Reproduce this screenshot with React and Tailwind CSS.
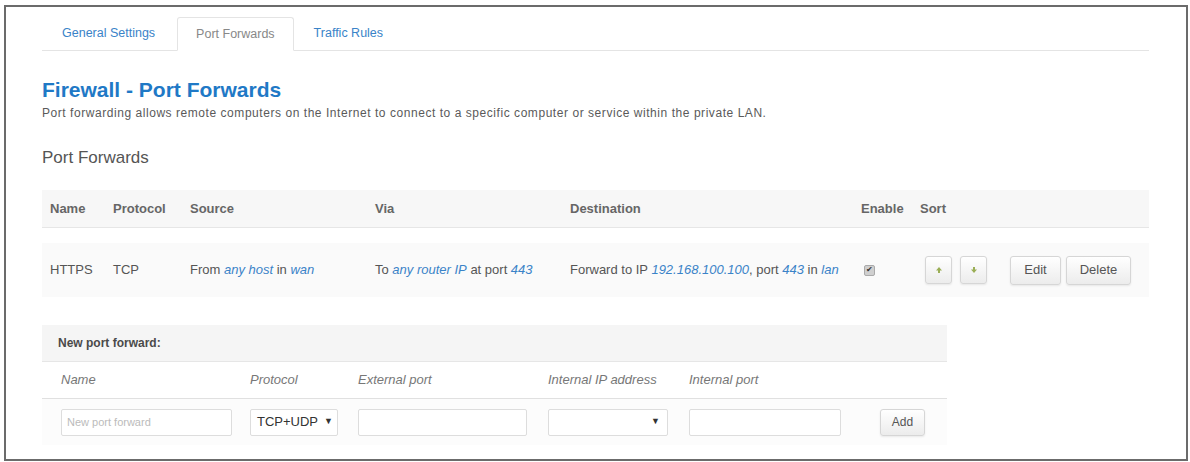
function Arrow({ up }) {
  return (
    <svg width="8" height="8" viewBox="0 0 8 8">
      {up ? (
        <path d="M4 1 L7 4.5 H5 V7 H3 V4.5 H1 Z" fill="#9aae55" />
      ) : (
        <path d="M4 7 L7 3.5 H5 V1 H3 V3.5 H1 Z" fill="#9aae55" />
      )}
    </svg>
  );
}

function Btn({ children, className = "" }) {
  return (
    <button
      className={`rounded-[3px] border border-[#d6d6d6] bg-gradient-to-b from-white to-[#ececec] text-[#555] shadow-[0_1px_2px_rgba(0,0,0,0.08)] ${className}`}
    >
      {children}
    </button>
  );
}

function A({ children }) {
  return <span className="italic text-[#3a83c8]">{children}</span>;
}

export default function App() {
  const font = { fontFamily: '"Liberation Sans", Arial, sans-serif' };
  return (
    <div className="w-[1190px] h-[462px] bg-white pt-[5px] pl-[4px]" style={font}>
      <div className="w-[1184px] h-[456px] border-2 border-[#6b6b6b] pl-[36px] pr-[37px]">
        {/* tabs */}
        <div className="flex items-end gap-[2px] h-[44px] border-b border-[#e4e4e4] text-[12.5px]">
          <div className="px-[20px] h-[33px] flex items-center text-[#3a83c8]">General Settings</div>
          <div className="px-[18px] h-[34px] -mb-px flex items-center border border-[#e4e4e4] border-b-white bg-white rounded-t-[3px] text-[#888]">
            Port Forwards
          </div>
          <div className="px-[18px] h-[33px] flex items-center text-[#3a83c8]">Traffic Rules</div>
        </div>

        <h2 className="mt-[26px] text-[21px] leading-[25px] font-bold text-[#1f79c6]">Firewall - Port Forwards</h2>
        <p className="mt-[4px] text-[12px] leading-[15px] text-[#5a5a5a] tracking-[0.55px]">
          Port forwarding allows remote computers on the Internet to connect to a specific computer or service within the private LAN.
        </p>

        <h3 className="mt-[27px] text-[17px] leading-[20px] text-[#555]">Port Forwards</h3>

        {/* table */}
        <div className="mt-[22px] text-[13px] text-[#555]">
          <div className="flex items-center h-[38px] bg-[#f7f7f7] border-b border-[#e6e6e6] font-bold text-[#666]">
            <div className="w-[71px] pl-[8px]">Name</div>
            <div className="w-[77px]">Protocol</div>
            <div className="w-[185px]">Source</div>
            <div className="w-[195px]">Via</div>
            <div className="w-[291px]">Destination</div>
            <div className="w-[59px]">Enable</div>
            <div>Sort</div>
          </div>
          <div className="flex items-center h-[54px] mt-[15px] bg-[#fafafa]">
            <div className="w-[71px] pl-[8px]">HTTPS</div>
            <div className="w-[77px]">TCP</div>
            <div className="w-[185px]">
              From <A>any host</A> in <A>wan</A>
            </div>
            <div className="w-[195px]">
              To <A>any router IP</A> at port <A>443</A>
            </div>
            <div className="w-[291px]">
              Forward to IP <A>192.168.100.100</A>, port <A>443</A> in <A>lan</A>
            </div>
            <div className="w-[59px] pl-[3px] flex items-center">
              <span className="w-[11px] h-[11px] rounded-[2px] bg-[#cfcfcf] border border-[#aaa] inline-flex items-center justify-center text-[8px] leading-none text-[#333]">
                ✔
              </span>
            </div>
            <div className="flex gap-[8px] ml-[5px]">
              <Btn className="w-[27px] h-[28px] flex items-center justify-center">
                <Arrow up />
              </Btn>
              <Btn className="w-[27px] h-[28px] flex items-center justify-center">
                <Arrow />
              </Btn>
            </div>
            <div className="flex gap-[5px] ml-[23px]">
              <Btn className="w-[51px] h-[29px] text-[13px]">Edit</Btn>
              <Btn className="w-[65px] h-[29px] text-[13px]">Delete</Btn>
            </div>
          </div>
        </div>

        {/* new port forward */}
        <div className="mt-[28px] w-[905px] text-[13px] text-[#555]">
          <div className="h-[37px] flex items-center pl-[16px] bg-[#f5f5f5] border-b border-[#e6e6e6] text-[12px] font-bold text-[#4a4a4a]">
            New port forward:
          </div>
          <div className="h-[37px] flex items-center italic text-[#777] border-b border-[#e0e0e0]">
            <div className="w-[208px] pl-[19px]">Name</div>
            <div className="w-[108px]">Protocol</div>
            <div className="w-[190px]">External port</div>
            <div className="w-[141px]">Internal IP address</div>
            <div>Internal port</div>
          </div>
          <div className="h-[46px] flex items-center bg-[#fcfcfc]">
            <div className="w-[208px] pl-[19px]">
              <div className="w-[171px] h-[27px] border border-[#ddd] rounded-[2px] bg-white flex items-center pl-[5px] text-[11px] text-[#bbb]">
                New port forward
              </div>
            </div>
            <div className="w-[108px]">
              <div className="w-[88px] h-[27px] border border-[#ddd] rounded-[2px] bg-white flex items-center pl-[6px] text-[13px] text-[#333]">
                TCP+UDP <span className="ml-[6px] text-[9px]">▼</span>
              </div>
            </div>
            <div className="w-[190px]">
              <div className="w-[169px] h-[27px] border border-[#ddd] rounded-[2px] bg-white" />
            </div>
            <div className="w-[141px]">
              <div className="w-[120px] h-[27px] border border-[#ddd] rounded-[2px] bg-white flex items-center justify-end pr-[7px] text-[9px] text-[#333]">
                ▼
              </div>
            </div>
            <div className="w-[191px]">
              <div className="w-[152px] h-[27px] border border-[#ddd] rounded-[2px] bg-white" />
            </div>
            <Btn className="w-[45px] h-[27px] text-[12px]">Add</Btn>
          </div>
        </div>
      </div>
    </div>
  );
}
